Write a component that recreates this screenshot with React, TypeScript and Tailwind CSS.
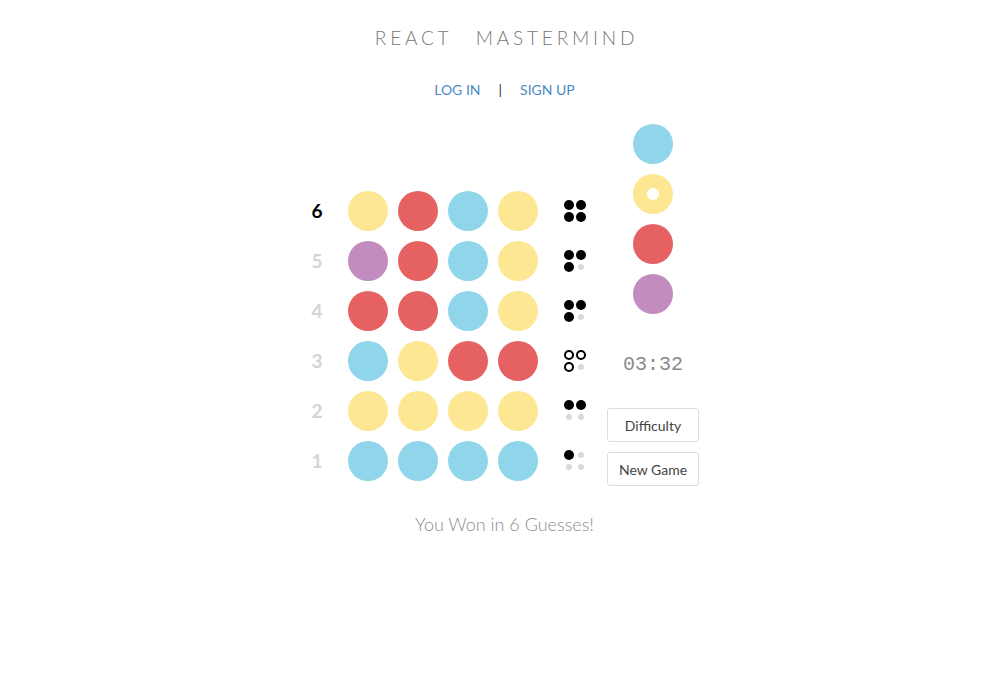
import React from "react";

const Y = "bg-[#fde792]";
const R = "bg-[#e66262]";
const B = "bg-[#90d5ea]";
const P = "bg-[#c28cbf]";

type Peg = "b" | "h" | "g";

const rows: { n: number; c: string[]; p: Peg[]; active?: boolean }[] = [
  { n: 6, c: [Y, R, B, Y], p: ["b", "b", "b", "b"], active: true },
  { n: 5, c: [P, R, B, Y], p: ["b", "b", "b", "g"] },
  { n: 4, c: [R, R, B, Y], p: ["b", "b", "b", "g"] },
  { n: 3, c: [B, Y, R, R], p: ["h", "h", "h", "g"] },
  { n: 2, c: [Y, Y, Y, Y], p: ["b", "b", "g", "g"] },
  { n: 1, c: [B, B, B, B], p: ["b", "g", "g", "g"] },
];

function PegDot({ t }: { t: Peg }) {
  return (
    <div className="w-[10px] h-[10px] flex items-center justify-center">
      {t === "b" && <div className="w-[10px] h-[10px] rounded-full bg-black" />}
      {t === "h" && <div className="w-[10px] h-[10px] rounded-full border-2 border-black" />}
      {t === "g" && <div className="w-[6px] h-[6px] rounded-full bg-[#d9d9d9]" />}
    </div>
  );
}

export default function App() {
  return (
    <div
      className="w-[1001px] h-[680px] bg-white flex flex-col items-center"
      style={{ fontFamily: "Lato, 'Open Sans', sans-serif" }}
    >
      <h1 className="mt-[26px] text-[19px] leading-[24px] font-light tracking-[3.8px] [word-spacing:3px] text-[#777] whitespace-pre pl-[12px]">
        {"REACT  MASTERMIND"}
      </h1>
      <div className="mt-[31px] pl-[8px] flex items-center text-[14px] leading-[18px]">
        <span className="text-[#4a8bc6]">LOG IN</span>
        <span className="mx-[18px] text-[#333]">|</span>
        <span className="text-[#4a8bc6]">SIGN UP</span>
      </div>
      <div className="mt-[20px] flex items-end">
        <div className="flex flex-col">
          {rows.map((r) => (
            <div key={r.n} className="flex items-center h-[50px]">
              <div
                className={`w-[30px] text-center text-[19px] ${
                  r.active ? "font-bold text-black" : "font-bold text-[#d4d4d4]"
                }`}
              >
                {r.n}
              </div>
              <div className="ml-[16px] flex gap-[10px]">
                {r.c.map((c, i) => (
                  <div key={i} className={`w-[40px] h-[40px] rounded-full ${c}`} />
                ))}
              </div>
              <div className="ml-[26px] grid grid-cols-2 gap-[2px] w-[22px]">
                {r.p.map((t, i) => (
                  <PegDot key={i} t={t} />
                ))}
              </div>
            </div>
          ))}
        </div>
        <div className="ml-[21px] w-[92px] flex flex-col items-center">
          <div className="flex flex-col items-center">
            {[B, Y, R, P].map((c, i) => (
              <div key={i} className="h-[50px] flex items-center justify-center">
                <div className={`w-[40px] h-[40px] rounded-full ${c} flex items-center justify-center`}>
                  {i === 1 && <div className="w-[12px] h-[12px] rounded-full bg-white" />}
                </div>
              </div>
            ))}
          </div>
          <div
            className="mt-[34px] text-[20px] leading-[24px] text-[#8a8a8a]"
            style={{ fontFamily: "'Liberation Mono', monospace" }}
          >
            03:32
          </div>
          <button className="mt-[31px] w-[92px] h-[34px] border border-[#dcdcdc] rounded-[3px] text-[14px] text-[#444] bg-white">
            Difficulty
          </button>
          <button className="mt-[10px] w-[92px] h-[34px] border border-[#dcdcdc] rounded-[3px] text-[14px] text-[#444] bg-white">
            New Game
          </button>
        </div>
      </div>
      <div className="mt-[26px] pl-[8px] text-[18px] leading-[24px] font-light text-[#8c8c8c]">
        You Won in 6 Guesses!
      </div>
    </div>
  );
}
